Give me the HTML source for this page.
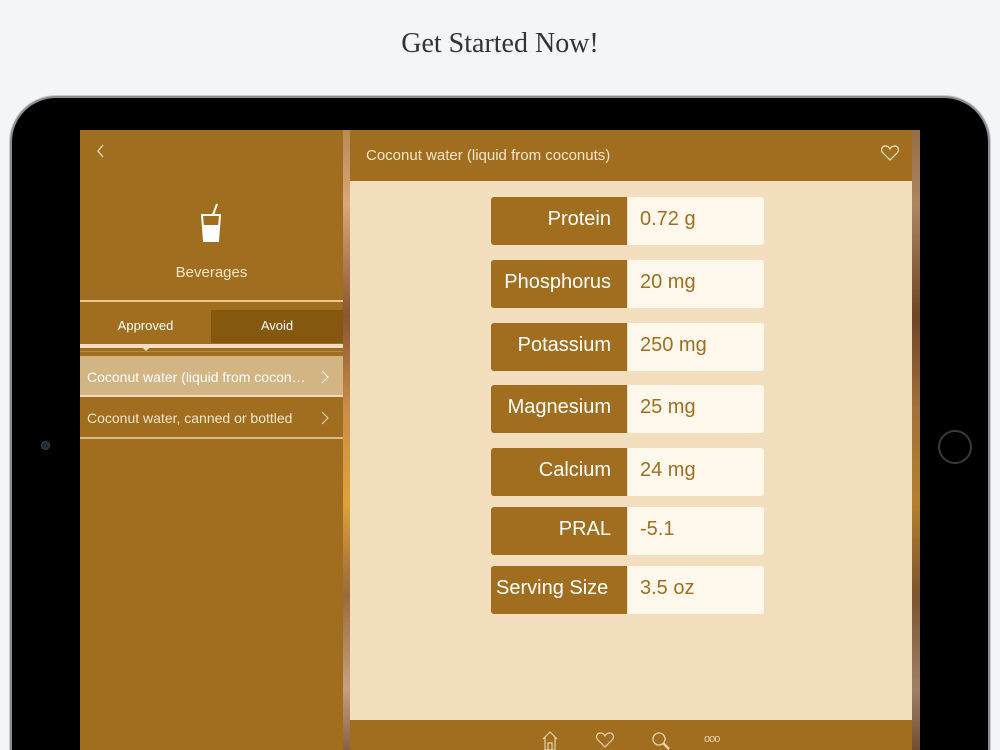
<!DOCTYPE html>
<html><head><style>
*{margin:0;padding:0;box-sizing:border-box}
html,body{width:1000px;height:750px;overflow:hidden}
body{background:#f4f5f7;position:relative;font-family:"Liberation Sans",sans-serif}
.t{position:absolute;top:28px;width:1000px;text-align:center;font-family:"Liberation Serif",serif;font-size:28px;color:#333}
.pad{position:absolute;left:10px;top:96px;width:980px;height:654px;background:#000;border-radius:46px 46px 0 0;border:2px solid #8a8d92;border-bottom:none;box-shadow:0 0 0 1px #c8cacd}
.scr{position:absolute;left:80px;top:130px;width:840px;height:620px;background:#a06e1e;overflow:hidden}
.ab{position:absolute}
.strip{background:linear-gradient(180deg,#b88a55 0%,#d9a77a 12%,#8a5530 30%,#c98e4a 45%,#e0a13a 60%,#9a6a3a 75%,#c7a080 90%,#8a6040 100%)}
.row{position:absolute;left:411px;width:273px;height:48px;border-radius:3px;overflow:hidden;font-size:20px}
.row .l{position:absolute;left:0;top:0;width:136px;height:48px;background:#a06e1e;color:#fff;text-align:right;padding-right:16px;line-height:44px}
.row .v{position:absolute;left:137px;top:0;width:136px;height:48px;background:#fff8ec;color:#a06e1e;padding-left:12px;line-height:44px}
</style></head><body>
<div class="t">Get Started Now!</div>
<div class="pad"></div>
<div class="ab" style="left:41px;top:441px;width:9px;height:9px;border-radius:50%;background:#1c2a3a;border:1px solid #444"></div>
<div class="ab" style="left:938px;top:430px;width:34px;height:34px;border-radius:50%;border:2px solid #3a3a3a"></div>
<div class="scr">
 <svg class="ab" style="left:16px;top:13px" width="10" height="16"><path d="M7 2 L2 8 L7 14" fill="none" stroke="#f3dfbe" stroke-width="1.3"/></svg>
 <svg class="ab" style="left:119px;top:73px" width="24" height="40"><path d="M14 12 L18 1" stroke="#fff" stroke-width="2"/><path d="M3 12 H21 L19 38 H5 Z" fill="none" stroke="#fff" stroke-width="2"/><path d="M4 22 H20 L19 38 H5 Z" fill="#fff"/></svg>
 <div class="ab" style="left:0;top:134px;width:263px;text-align:center;color:#f6e6cc;font-size:15px">Beverages</div>
 <div class="ab" style="left:0;top:170px;width:263px;height:2px;background:#e8c990"></div>
 <div class="ab" style="left:131px;top:180px;width:132px;height:33px;background:#85580f"></div>
 <div class="ab" style="left:0;top:188px;width:131px;text-align:center;color:#fff;font-size:13px">Approved</div>
 <div class="ab" style="left:131px;top:188px;width:132px;text-align:center;color:#fff;font-size:13px">Avoid</div>
 <div class="ab" style="left:0;top:214px;width:263px;height:4px;background:#f3dfbe"></div>
 <div class="ab" style="left:62px;top:217px;width:0;height:0;border-left:4px solid transparent;border-right:4px solid transparent;border-top:4px solid #f3dfbe"></div>
 <div class="ab" style="left:0;top:221px;width:263px;height:1px;background:#b88a45"></div>
 <div class="ab" style="left:0;top:226px;width:263px;height:41px;background:#d3b584;border-bottom:2px solid #f0dcb8"></div>
 <div class="ab" style="left:7px;top:239px;color:#fff;font-size:14px">Coconut water (liquid from cocon…</div>
 <svg class="ab" style="left:241px;top:240px" width="8" height="14"><path d="M1 1 L7 7 L1 13" fill="none" stroke="#fff" stroke-width="1"/></svg>
 <div class="ab" style="left:0;top:307px;width:263px;height:2px;background:#d9bb88"></div>
 <div class="ab" style="left:7px;top:280px;color:#f6e6cc;font-size:14px">Coconut water, canned or bottled</div>
 <svg class="ab" style="left:241px;top:281px" width="8" height="14"><path d="M1 1 L7 7 L1 13" fill="none" stroke="#f3dfbe" stroke-width="1"/></svg>
 <div class="ab strip" style="left:263px;top:0;width:7px;height:620px"></div>
 <div class="ab strip" style="left:832px;top:0;width:8px;height:620px;filter:brightness(.8)"></div>
 <div class="ab" style="left:270px;top:51px;width:562px;height:539px;background:#f3dfbe"></div>
 <div class="ab" style="left:286px;top:17px;color:#f6e6cc;font-size:15px">Coconut water (liquid from coconuts)</div>
 <svg class="ab" style="left:801px;top:15px" width="18" height="16"><path d="M9 15 L2 8 C-1 5 1 1 4.5 1 C7 1 8.5 3 9 4 C9.5 3 11 1 13.5 1 C17 1 19 5 16 8 Z" fill="none" stroke="#f6e6cc" stroke-width="1.2"/></svg>
 <div class="row" style="top:67px"><div class="l">Protein</div><div class="v">0.72 g</div></div>
 <div class="row" style="top:130px"><div class="l">Phosphorus</div><div class="v">20 mg</div></div>
 <div class="row" style="top:193px"><div class="l">Potassium</div><div class="v">250 mg</div></div>
 <div class="row" style="top:255px"><div class="l">Magnesium</div><div class="v">25 mg</div></div>
 <div class="row" style="top:318px"><div class="l">Calcium</div><div class="v">24 mg</div></div>
 <div class="row" style="top:377px"><div class="l">PRAL</div><div class="v">-5.1</div></div>
 <div class="row" style="top:436px"><div class="l" style="text-align:left;padding-left:5px;padding-right:0">Serving Size</div><div class="v">3.5 oz</div></div>
 <svg class="ab" style="left:460px;top:600px" width="20" height="20"><path d="M3 9 L10 2 L17 9 M5 7 V20 H15 V7 M8 20 V13 H12 V20" fill="none" stroke="#e8d2ae" stroke-width="1.2"/></svg>
 <svg class="ab" style="left:516px;top:602px" width="18" height="16"><path d="M9 15 L2 8 C-1 5 1 1 4.5 1 C7 1 8.5 3 9 4 C9.5 3 11 1 13.5 1 C17 1 19 5 16 8 Z" fill="none" stroke="#e8d2ae" stroke-width="1.2"/></svg>
 <svg class="ab" style="left:571px;top:601px" width="20" height="20"><circle cx="8" cy="8" r="6" fill="none" stroke="#e8d2ae" stroke-width="1.3"/><path d="M12 12 L18 18" stroke="#e8d2ae" stroke-width="2.5"/></svg>
 <div class="ab" style="left:624px;top:603px;color:#e8d2ae;font-size:11px;letter-spacing:-1px">ooo</div>
</div>
</body></html>
